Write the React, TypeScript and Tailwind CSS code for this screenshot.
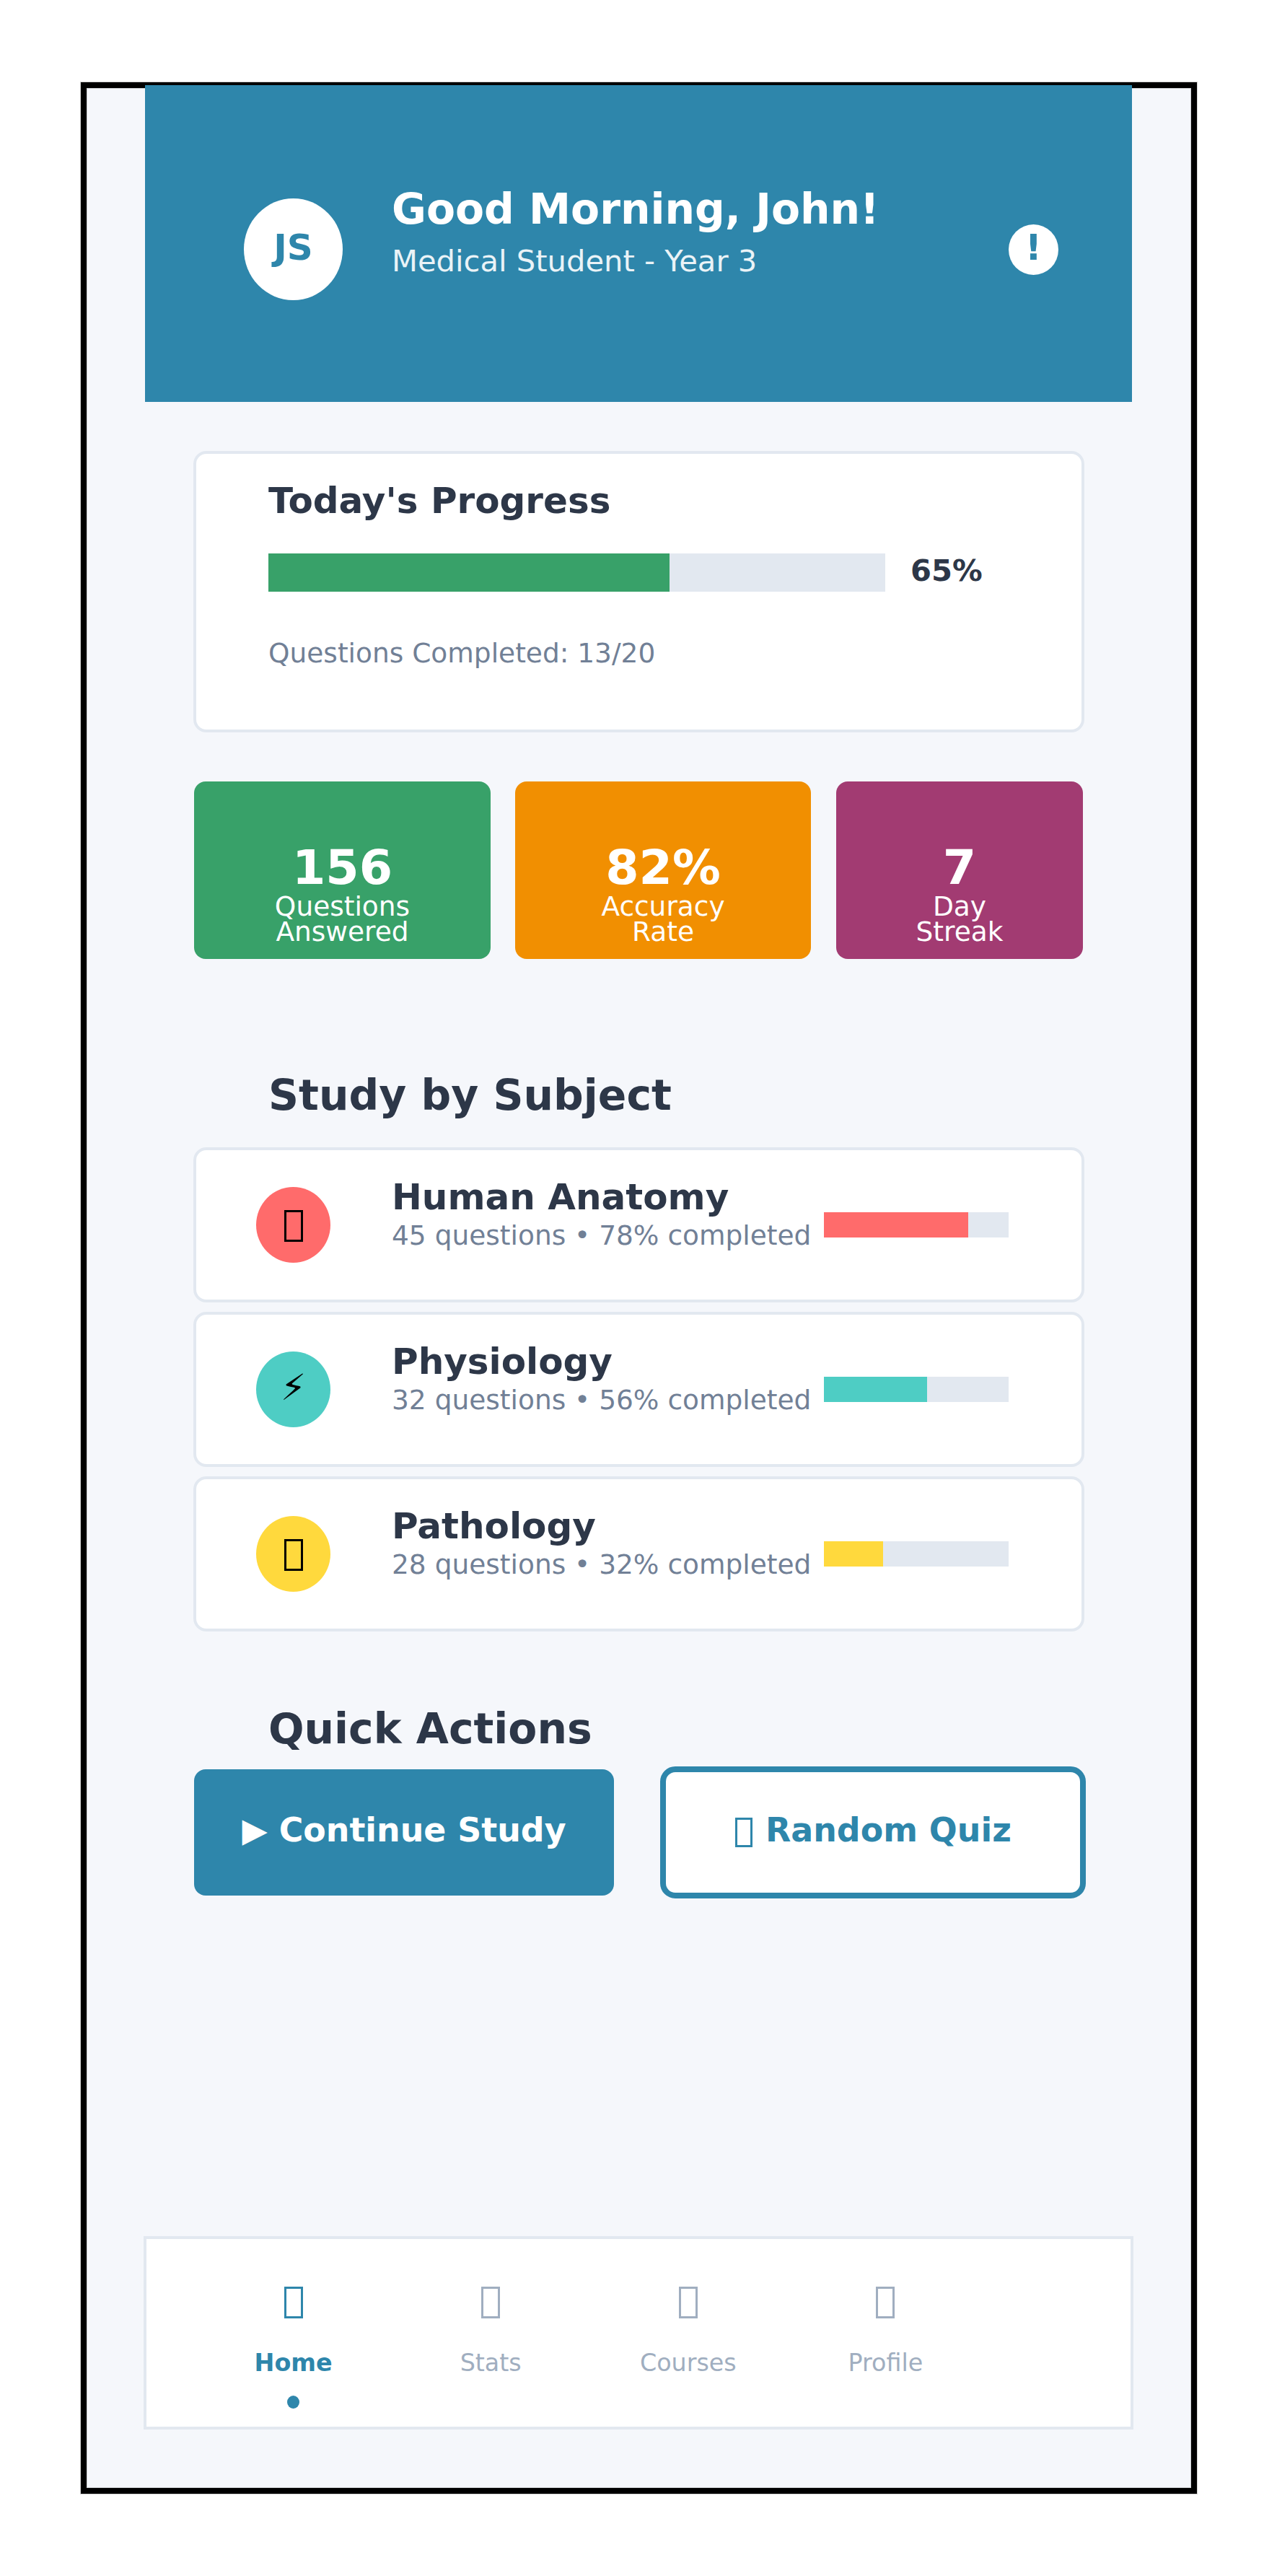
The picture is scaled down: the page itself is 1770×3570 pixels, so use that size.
type Stat = { value: string; lines: [string, string]; box: string };
type Subject = {
  name: string;
  questions: number;
  percent: number;
  color: string;
  icon: 'box' | 'bolt';
};

const stats: Stat[] = [
  { value: '156', lines: ['Questions', 'Answered'], box: 'w-[411px] bg-[#38a169]' },
  { value: '82%', lines: ['Accuracy', 'Rate'], box: 'w-[410px] bg-[#f18f01]' },
  { value: '7', lines: ['Day', 'Streak'], box: 'ml-px w-[342px] bg-[#a23b72]' },
];

const subjects: Subject[] = [
  { name: 'Human Anatomy', questions: 45, percent: 78, color: 'bg-[#ff6b6b]', icon: 'box' },
  { name: 'Physiology', questions: 32, percent: 56, color: 'bg-[#4ecdc4]', icon: 'bolt' },
  { name: 'Pathology', questions: 28, percent: 32, color: 'bg-[#ffd93d]', icon: 'box' },
];

const tabs = ['Home', 'Stats', 'Courses', 'Profile'];

function Header() {
  return (
    <header className="-mt-1 flex h-[439px] items-start bg-[#2e86ab] pl-[137px]">
      <div className="mt-[157px] flex h-[141px] w-[137px] shrink-0 justify-center rounded-[50%] bg-white pt-[39px] text-[50px] leading-[58px] font-bold text-[#2e86ab]">
        JS
      </div>
      <div className="mt-[138px] ml-[68px] w-[855px] shrink-0">
        <h1 className="text-[58.33px] leading-[68px] font-bold text-white">Good Morning, John!</h1>
        <p className="mt-[13px] text-[41.67px] leading-[49px] text-white/90">
          Medical Student - Year 3
        </p>
      </div>
      <div className="mt-[193px] flex h-[70px] w-[69px] shrink-0 justify-center rounded-[50%] bg-white pt-[3px] text-[50px] leading-[58px] font-bold text-[#2e86ab]">
        !
      </div>
    </header>
  );
}

function ProgressCard() {
  return (
    <section className="mt-[68px] h-[390px] rounded-[18px] border-4 border-[#e2e8f0] bg-white pt-[36px] pl-[100px]">
      <h2 className="text-[50px] leading-[58px] font-bold">Today's Progress</h2>
      <div className="mt-[44px] flex h-[53px] items-start">
        <div className="h-full w-[855px] bg-[#e2e8f0]">
          <div className="h-full w-[65%] bg-[#38a169]" />
        </div>
        <span className="-mt-px ml-[35px] text-[41.67px] leading-[49px] font-bold">65%</span>
      </div>
      <p className="mt-[63px] text-[37.5px] leading-[44px] text-[#718096]">
        Questions Completed: 13/20
      </p>
    </section>
  );
}

function StatsRow() {
  return (
    <section className="mt-[68px] ml-px flex gap-[34px]">
      {stats.map((s) => (
        <div key={s.value} className={`h-[246px] rounded-[16px] pt-20 text-center text-white ${s.box}`}>
          <div className="text-[66.67px] leading-[78px] font-bold">{s.value}</div>
          <div className="-mt-[7px] text-[37.5px] leading-[44px]">
            {s.lines.map((line) => (
              <div key={line} className="h-[35px]">
                {line}
              </div>
            ))}
          </div>
        </div>
      ))}
    </section>
  );
}

function SubjectCard({ subject }: { subject: Subject }) {
  return (
    <div className="flex h-[215px] items-start rounded-[18px] border-4 border-[#e2e8f0] bg-white pl-[83px]">
      <div
        className={`mt-[51px] flex h-[105px] w-[103px] shrink-0 justify-center rounded-[50%] ${subject.color}`}
      >
        {subject.icon === 'bolt' ? (
          <span className="pt-[21px] text-[50px] leading-[58px] text-black">{'\u26A1\uFE0E'}</span>
        ) : (
          <span className="mt-[32px] h-[44px] w-[26px] border-[3px] border-black" />
        )}
      </div>
      <div className="mt-[36px] ml-[85px] w-[599px] shrink-0 whitespace-nowrap">
        <h3 className="text-[50px] leading-[58px] font-bold">{subject.name}</h3>
        <p className="mt-[2px] text-[37.5px] leading-[44px] text-[#718096]">
          {`${subject.questions} questions • ${subject.percent}% completed`}
        </p>
      </div>
      <div className="mt-[86px] h-[35px] w-[256px] shrink-0 bg-[#e2e8f0]">
        <div className={`h-full ${subject.color}`} style={{ width: `${subject.percent}%` }} />
      </div>
    </div>
  );
}

function QuickActions() {
  return (
    <section className="mt-[101px]">
      <h2 className="pl-[104px] text-[58.33px] leading-[68px] font-bold">Quick Actions</h2>
      <div className="mt-[18px] flex items-start text-[45.83px] leading-[54px] font-bold whitespace-nowrap">
        <button className="mt-1 ml-px flex h-[175px] w-[582px] shrink-0 items-start justify-center rounded-[16px] bg-[#2e86ab] pt-[57px] text-white">
          ▶ Continue Study
        </button>
        <button className="ml-16 flex h-[183px] w-[590px] shrink-0 items-start rounded-[21px] border-8 border-[#2e86ab] bg-white pt-[53px] pl-[96px] text-[#2e86ab]">
          <span className="mt-[10px] h-[41px] w-[24px] border-[3px] border-[#2e86ab]" />
          <span className="ml-[18px]">Random Quiz</span>
        </button>
      </div>
    </section>
  );
}

function BottomNav() {
  return (
    <nav className="-mx-[2px] mt-[468px] flex h-[268px] border-4 border-[#e2e8f0] bg-white pt-[66px] pl-[66.8px]">
      {tabs.map((tab, i) => (
        <div
          key={tab}
          className={`flex w-[273.6px] shrink-0 flex-col items-center ${
            i === 0 ? 'font-bold text-[#2e86ab]' : 'text-[#a0aec0]'
          }`}
        >
          <span className="h-[44px] w-[26px] border-[3px] border-current" />
          <span className="mt-[42px] text-[33.33px] leading-[39px]">{tab}</span>
          {i === 0 && <span className="mt-[26px] h-[18px] w-[17px] rounded-[50%] bg-[#2e86ab]" />}
        </div>
      ))}
    </nav>
  );
}

export default function App() {
  return (
    <div className="h-[3570px] w-[1770px] bg-white pt-[114px] pl-[112px] font-['DejaVu_Sans',sans-serif] text-[#2d3748]">
      <div className="h-[3342px] w-[1547px] border-8 border-black bg-[#f5f7fb] px-[81px] shadow-[0_0_0_1px_#d4d4d4,inset_0_0_0_1px_#cdcfd2]">
        <div className="w-[1368px]">
          <Header />
          <main className="pr-[66px] pl-[67px]">
            <ProgressCard />
            <StatsRow />
            <h2 className="mt-[155px] pl-[104px] text-[58.33px] leading-[68px] font-bold">
              Study by Subject
            </h2>
            <section className="mt-[38px] flex flex-col gap-[13px]">
              {subjects.map((s) => (
                <SubjectCard key={s.name} subject={s} />
              ))}
            </section>
            <QuickActions />
          </main>
          <BottomNav />
        </div>
      </div>
    </div>
  );
}
